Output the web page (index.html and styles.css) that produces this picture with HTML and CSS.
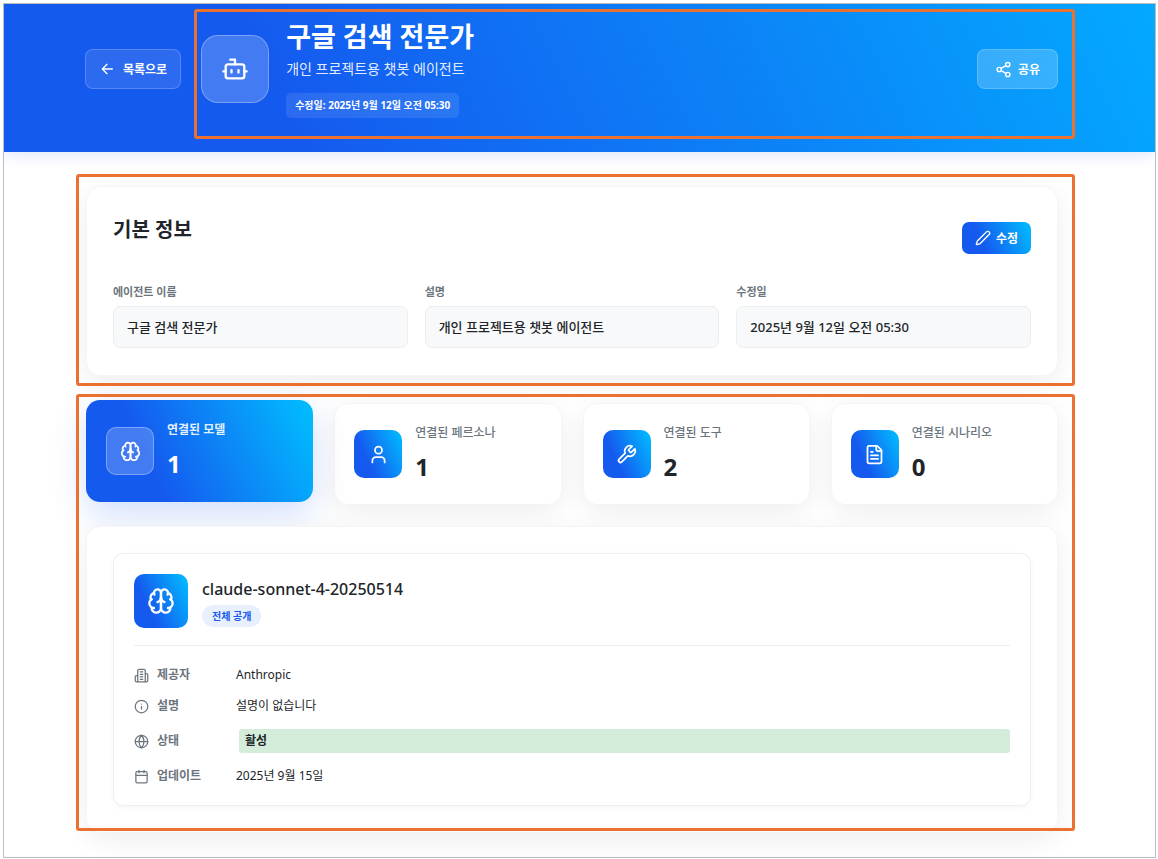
FILE: index.html
```html
<!DOCTYPE html>
<html lang="ko">
<head>
<meta charset="utf-8">
<meta name="viewport" content="width=device-width, initial-scale=1">
<title>구글 검색 전문가</title>
<link rel="stylesheet" href="styles.css">
</head>
<body>
<svg class="sprite" aria-hidden="true">
  <symbol id="brain" viewBox="0 0 24 24">
    <path d="M12 5a3 3 0 1 0-5.997.125 4 4 0 0 0-2.526 5.77 4 4 0 0 0 .556 6.588A4 4 0 1 0 12 18Z"/>
    <path d="M12 5a3 3 0 1 1 5.997.125 4 4 0 0 1 2.526 5.77 4 4 0 0 1-.556 6.588A4 4 0 1 1 12 18Z"/>
    <path d="M15 13a4.500 4.500 0 0 1-3-4 4.500 4.500 0 0 1-3 4M17.599 6.500a3 3 0 0 0 .399-1.375M6.003 5.125A3 3 0 0 0 6.401 6.500M3.477 10.896a4 4 0 0 1 .585-.396M19.938 10.500a4 4 0 0 1 .585.396M6 18a4 4 0 0 1-1.967-.516M19.967 17.484A4 4 0 0 1 18 18"/>
  </symbol>
</svg>
<div class="page">
  <header class="hero">
    <button class="glass-button" type="button">
      <svg class="icon icon-md" viewBox="0 0 24 24"><path d="m12 19-7-7 7-7M20 12H5"/></svg>
      목록으로
    </button>
    <div class="hero-main">
      <div class="hero-icon">
        <svg class="icon icon-xl" viewBox="0 0 24 24"><path d="M12 8V4H8M2 14h2M20 14h2M15 13v2M9 13v2"/><rect width="16" height="12" x="4" y="8" rx="2"/></svg>
      </div>
      <div class="hero-text">
        <h1>구글 검색 전문가</h1>
        <p class="hero-sub">개인 프로젝트용 챗봇 에이전트</p>
        <span class="date-chip">수정일: 2025년 9월 12일 오전 05:30</span>
      </div>
      <button class="glass-button share" type="button">
        <svg class="icon icon-lg" viewBox="0 0 24 24"><circle cx="18" cy="5" r="3"/><circle cx="6" cy="12" r="3"/><circle cx="18" cy="19" r="3"/><path d="m8.600 13.500 6.800 4M15.400 6.500l-6.800 4"/></svg>
        공유
      </button>
      <div class="outline outline-hero"></div>
    </div>
  </header>

  <main class="content">
    <section class="card info">
      <div class="info-head">
        <h2>기본 정보</h2>
        <button class="edit-button" type="button">
          <svg class="icon icon-md" viewBox="0 0 24 24"><path d="M21.174 6.812a1 1 0 0 0-3.986-3.987L3.842 16.174a2 2 0 0 0-.5.830l-1.321 4.352a.5.5 0 0 0 .623.622l4.353-1.320a2 2 0 0 0 .830-.497z"/></svg>
          수정
        </button>
      </div>
      <dl class="fields">
        <div><dt>에이전트 이름</dt><dd>구글 검색 전문가</dd></div>
        <div><dt>설명</dt><dd>개인 프로젝트용 챗봇 에이전트</dd></div>
        <div><dt>수정일</dt><dd>2025년 9월 12일 오전 05:30</dd></div>
      </dl>
      <div class="outline outline-info"></div>
    </section>

    <section class="links">
      <div class="stats">
        <button class="card stat active" type="button">
          <span class="tile"><svg class="icon icon-tile" viewBox="0 0 24 24"><use href="#brain"/></svg></span>
          <span class="stat-text"><span class="stat-label">연결된 모델</span><span class="stat-count">1</span></span>
        </button>
        <button class="card stat" type="button">
          <span class="tile"><svg class="icon icon-tile" viewBox="0 0 24 24"><path d="M19 21v-2a4 4 0 0 0-4-4H9a4 4 0 0 0-4 4v2"/><circle cx="12" cy="7" r="4"/></svg></span>
          <span class="stat-text"><span class="stat-label">연결된 페르소나</span><span class="stat-count">1</span></span>
        </button>
        <button class="card stat" type="button">
          <span class="tile"><svg class="icon icon-tile" viewBox="0 0 24 24"><path d="M14.700 6.300a1 1 0 0 0 0 1.400l1.600 1.600a1 1 0 0 0 1.400 0l3.770-3.770a6 6 0 0 1-7.940 7.940l-6.910 6.910a2.120 2.120 0 0 1-3-3l6.910-6.910a6 6 0 0 1 7.940-7.940l-3.760 3.760z"/></svg></span>
          <span class="stat-text"><span class="stat-label">연결된 도구</span><span class="stat-count">2</span></span>
        </button>
        <button class="card stat" type="button">
          <span class="tile"><svg class="icon icon-tile" viewBox="0 0 24 24"><path d="M15 2H6a2 2 0 0 0-2 2v16a2 2 0 0 0 2 2h12a2 2 0 0 0 2-2V7Z"/><path d="M14 2v4a2 2 0 0 0 2 2h4M10 9H8M16 13H8M16 17H8"/></svg></span>
          <span class="stat-text"><span class="stat-label">연결된 시나리오</span><span class="stat-count">0</span></span>
        </button>
      </div>

      <div class="card panel">
        <article class="model">
          <div class="model-head">
            <div class="tile tile-lg"><svg class="icon icon-xl" viewBox="0 0 24 24"><use href="#brain"/></svg></div>
            <div class="model-title">
              <h3>claude-sonnet-4-20250514</h3>
              <span class="tag">전체 공개</span>
            </div>
          </div>
          <dl class="rows">
            <div class="row">
              <dt><svg class="icon icon-row" viewBox="0 0 24 24"><path d="M6 22V4a2 2 0 0 1 2-2h8a2 2 0 0 1 2 2v18ZM6 12H4a2 2 0 0 0-2 2v6a2 2 0 0 0 2 2h2M18 9h2a2 2 0 0 1 2 2v9a2 2 0 0 1-2 2h-2M10 6h4M10 10h4M10 14h4M10 18h4"/></svg>제공자</dt>
              <dd>Anthropic</dd>
            </div>
            <div class="row">
              <dt><svg class="icon icon-row" viewBox="0 0 24 24"><circle cx="12" cy="12" r="10"/><path d="M12 16v-4M12 8h.010"/></svg>설명</dt>
              <dd>설명이 없습니다</dd>
            </div>
            <div class="row">
              <dt><svg class="icon icon-row" viewBox="0 0 24 24"><circle cx="12" cy="12" r="10"/><path d="M12 2a14.500 14.500 0 0 0 0 20 14.500 14.500 0 0 0 0-20M2 12h20"/></svg>상태</dt>
              <dd class="status">활성</dd>
            </div>
            <div class="row">
              <dt><svg class="icon icon-row" viewBox="0 0 24 24"><path d="M8 2v4M16 2v4M3 10h18"/><rect x="3" y="4" width="18" height="18" rx="2"/></svg>업데이트</dt>
              <dd>2025년 9월 15일</dd>
            </div>
          </dl>
        </article>
      </div>
      <div class="outline outline-links"></div>
    </section>
  </main>
</div>
</body>
</html>
```
FILE: styles.css
```css
:root {
  --blue: #155aef;
  --sky: #00bfff;
  --gradient: linear-gradient(65deg, var(--blue) 30%, var(--sky) 100%);
  --ink: #212529;
  --muted: #6c757d;
  --line: #eceef0;
}

* { box-sizing: border-box; }

body {
  margin: 3px 2px 1px 3px;
  background: #fff;
  color: var(--ink);
  font-family: "Noto Sans", "Noto Sans CJK KR", sans-serif;
  font-size: 12px;
}

h1, h2, h3, p, dl, dd { margin: 0; }
button { font: inherit; cursor: pointer; }

.sprite { position: absolute; width: 0; height: 0; }

.page {
  border: 1px solid #bdbdbd;
  overflow: hidden;
}

.icon {
  flex: none;
  fill: none;
  stroke: currentColor;
  stroke-width: 2;
  stroke-linecap: round;
  stroke-linejoin: round;
}
.icon-md { width: 16px; height: 16px; }
.icon-lg { width: 17px; height: 17px; }
.icon-xl { width: 28px; height: 28px; }
.icon-tile { width: 21px; height: 21px; }
.icon-row { width: 15px; height: 15px; }

.outline {
  position: absolute;
  border: 3px solid #eb7130;
  border-radius: 3px;
  pointer-events: none;
}

/* Hero */
.hero {
  display: flex;
  align-items: center;
  gap: 20px;
  padding: 16px 97px 34px 81px;
  background: linear-gradient(65deg, var(--blue) 25%, #03a9ff 100%);
  box-shadow: 0 3px 14px rgba(21, 90, 239, .15);
  color: #fff;
}
.hero-main {
  position: relative;
  display: flex;
  flex: 1;
  align-items: center;
  gap: 17px;
}
.outline-hero { inset: -11px -17px -21px -7px; }

.glass-button {
  display: flex;
  align-items: center;
  justify-content: center;
  gap: 8px;
  height: 40px;
  padding: 0 13px;
  border: 1px solid rgba(255, 255, 255, .2);
  border-radius: 8px;
  background: rgba(255, 255, 255, .1);
  color: #fff;
  font-weight: 600;
}
.glass-button.share {
  gap: 6px;
  margin-left: auto;
  padding: 0 17px;
  background: rgba(255, 255, 255, .2);
}

.hero-icon {
  display: grid;
  place-items: center;
  width: 68px;
  height: 68px;
  border: 1px solid rgba(255, 255, 255, .3);
  border-radius: 17px;
  background: rgba(255, 255, 255, .2);
}
.hero-text {
  display: flex;
  flex-direction: column;
  align-items: flex-start;
}
.hero-text h1 {
  margin-bottom: 5px;
  font-size: 27px;
  font-weight: 700;
  line-height: 34px;
}
.hero-sub {
  margin-bottom: 14px;
  color: rgba(255, 255, 255, .9);
  font-size: 14px;
  line-height: 20px;
}
.date-chip {
  padding: 0 9px;
  border-radius: 5px;
  background: rgba(255, 255, 255, .1);
  font-size: 10px;
  font-weight: 700;
  line-height: 25px;
}

/* Cards */
.content {
  display: flex;
  flex-direction: column;
  gap: 27px;
  padding: 34px 97px 24px 82px;
}
.card {
  border: 1px solid #f4f5f6;
  border-radius: 14px;
  background: #fff;
  box-shadow: 0 7px 27px rgba(0, 0, 0, .07);
}

.info { position: relative; padding: 27px 26px; }
.outline-info { inset: -13px -18px -11px -11px; }
.info-head {
  display: flex;
  align-items: center;
  justify-content: space-between;
  height: 48px;
  margin-bottom: 22px;
}
.info-head h2 {
  align-self: flex-start;
  font-size: 20px;
  font-weight: 700;
  line-height: 32px;
}
.edit-button {
  display: flex;
  align-items: center;
  gap: 5px;
  height: 32px;
  padding: 0 13px;
  border: 0;
  border-radius: 7px;
  background: var(--gradient);
  color: #fff;
  font-weight: 600;
}
.fields {
  display: grid;
  grid-template-columns: repeat(3, 1fr);
  gap: 17px;
}
.fields dt {
  margin-bottom: 6px;
  color: var(--muted);
  font-size: 11px;
  font-weight: 600;
  line-height: 16px;
}
.fields dd {
  padding: 0 13px;
  border: 1px solid var(--line);
  border-radius: 7px;
  background: #f8f9fa;
  font-size: 13px;
  font-weight: 500;
  line-height: 40px;
}

/* Linked resources */
.links { position: relative; }
.outline-links { inset: -9px -17px 2px -10px; }
.stats {
  display: grid;
  grid-template-columns: repeat(4, 1fr);
  gap: 21px;
  margin-bottom: 21px;
}
.stat {
  display: flex;
  align-items: center;
  gap: 13px;
  height: 102px;
  padding: 0 19px;
  color: var(--ink);
  text-align: left;
}
.stat.active {
  border-color: transparent;
  background: var(--gradient) border-box;
  box-shadow: 0 12px 34px rgba(21, 90, 239, .2);
  color: #fff;
  transform: translateY(-3px);
}
.tile {
  display: grid;
  flex: none;
  place-items: center;
  width: 48px;
  height: 48px;
  border-radius: 10px;
  background: var(--gradient);
  color: #fff;
}
.active .tile {
  border: 1px solid rgba(255, 255, 255, .3);
  background: rgba(255, 255, 255, .2);
}
.stat-text { display: flex; flex-direction: column; gap: 8px; }
.stat-label {
  color: var(--muted);
  font-weight: 500;
  line-height: 18px;
}
.active .stat-label {
  color: rgba(255, 255, 255, .9);
  font-weight: 600;
}
.stat-count {
  font-size: 24px;
  font-weight: 700;
  line-height: 34px;
}

.panel { position: relative; padding: 26px; }
.model {
  padding: 20px 20px 19px;
  border: 1px solid var(--line);
  border-radius: 10px;
  box-shadow: 0 2px 7px rgba(0, 0, 0, .04);
}
.model-head {
  display: flex;
  gap: 14px;
  padding-bottom: 17px;
  border-bottom: 1px solid var(--line);
}
.tile-lg { width: 54px; height: 54px; }
.model-title {
  display: flex;
  flex-direction: column;
  align-items: flex-start;
  gap: 1px;
}
.model-title h3 {
  font-size: 16px;
  font-weight: 500;
  line-height: 30px;
}
.tag {
  padding: 0 10px;
  border-radius: 11px;
  background: #e8f0fe;
  color: var(--blue);
  font-size: 10px;
  font-weight: 700;
  line-height: 22px;
}

.rows {
  display: flex;
  flex-direction: column;
  gap: 11px;
  padding-top: 19px;
}
.row {
  display: flex;
  align-items: center;
  line-height: 20px;
}
.row dt {
  display: flex;
  flex: none;
  align-items: center;
  gap: 8px;
  width: 102px;
  color: var(--muted);
  font-weight: 600;
}
.row dd { flex: 1; }
.row .status {
  margin: 2px 0 2px 3px;
  padding: 2px 6px;
  border-radius: 3px;
  background: #d4edda;
  font-weight: 700;
}
```
